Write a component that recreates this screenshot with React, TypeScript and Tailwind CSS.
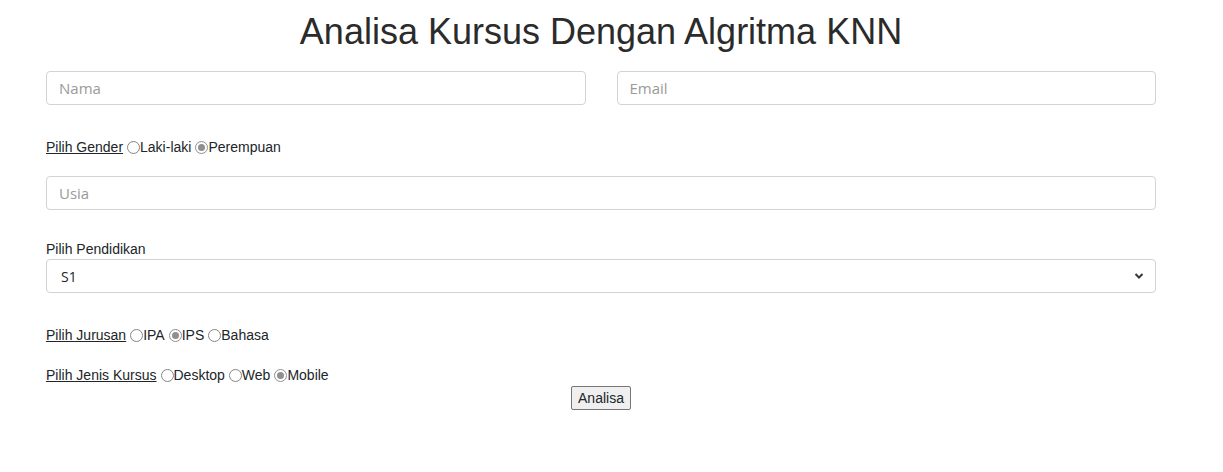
import { useState } from "react";

// radio kecil ala chrome
const Radio = ({ checked, label }: { checked: boolean; label: string }) => (
  <span className="inline-flex items-center">
    <span
      className={
        checked
          ? "inline-flex items-center justify-center w-[13px] h-[13px] rounded-full border border-[#8f8f8f] bg-white ml-[1px]"
          : "inline-flex w-[13px] h-[13px] rounded-full border border-[#858585] bg-white ml-[1px]"
      }
    >
      {checked && <span className="w-[7px] h-[7px] rounded-full bg-[#8f8f8f]" />}
    </span>
    <span>{label}</span>
  </span>
);

const RadioRow = ({ title, options, selected }: { title: string; options: string[]; selected: string }) => (
  <div className="flex items-center h-[20px] text-[14px] leading-[20px] text-[#212529] gap-[3px]">
    <span className="underline">{title}</span>
    {options.map((o) => (
      <Radio key={o} label={o} checked={o === selected} />
    ))}
  </div>
);

const inputCls =
  "w-full h-[34px] border border-[#ced4da] rounded-[4px] px-[12px] text-[15px] text-[#495057] placeholder:text-[#9a9a9a] outline-none bg-white";

const App = () => {
  const [value, setValue] = useState({ nama: "", email: "", usia: "" });

  return (
    <div className="w-[1223px] h-[472px] bg-white" style={{ fontFamily: '"Liberation Sans", Arial, sans-serif' }}>
      <div className="w-[1110px] ml-[46px] pt-[10px]">
        <h1 className="text-center text-[36px] leading-[43px] text-[#2b2b2b]">Analisa Kursus Dengan Algritma KNN</h1>

        <div className="flex gap-[31px] mt-[18px]">
          <input
            className={inputCls}
            style={{ fontFamily: '"Open Sans", sans-serif' }}
            placeholder="Nama"
            value={value.nama}
            onChange={(e) => setValue({ ...value, nama: e.target.value })}
          />
          <input
            className={inputCls}
            style={{ fontFamily: '"Open Sans", sans-serif' }}
            placeholder="Email"
            value={value.email}
            onChange={(e) => setValue({ ...value, email: e.target.value })}
          />
        </div>

        <div className="mt-[32px]">
          <RadioRow title="Pilih Gender" options={["Laki-laki", "Perempuan"]} selected="Perempuan" />
        </div>

        <div className="mt-[19px]">
          <input
            className={inputCls}
            style={{ fontFamily: '"Open Sans", sans-serif' }}
            placeholder="Usia"
            value={value.usia}
            onChange={(e) => setValue({ ...value, usia: e.target.value })}
          />
        </div>

        <div className="mt-[29px] text-[14px] leading-[20px] text-[#212529]">Pilih Pendidikan</div>
        <div className="relative">
          <select
            className="w-full h-[34px] border border-[#ced4da] rounded-[4px] px-[14px] text-[14px] text-[#212529] appearance-none bg-white outline-none"
            style={{ fontFamily: '"Open Sans", sans-serif' }}
            defaultValue="S1"
          >
            <option>SMA</option>
            <option>D3</option>
            <option>S1</option>
            <option>S2</option>
          </select>
          <svg
            className="absolute right-[12px] top-[13px] pointer-events-none"
            width="10"
            height="8"
            viewBox="0 0 10 8"
            fill="none"
          >
            <path d="M1.5 2l3.5 3.5L8.5 2" stroke="#343a40" strokeWidth="2" />
          </svg>
        </div>

        <div className="mt-[32px]">
          <RadioRow title="Pilih Jurusan" options={["IPA", "IPS", "Bahasa"]} selected="IPS" />
        </div>
        <div className="mt-[20px]">
          <RadioRow title="Pilih Jenis Kursus" options={["Desktop", "Web", "Mobile"]} selected="Mobile" />
        </div>

        <div className="flex justify-center mt-[1px]">
          <button className="h-[24px] px-[6px] bg-[#efefef] border border-[#767676] rounded-[2px] text-[14px] leading-[20px] text-[#212529]">
            Analisa
          </button>
        </div>
      </div>
    </div>
  );
};

export default App;
